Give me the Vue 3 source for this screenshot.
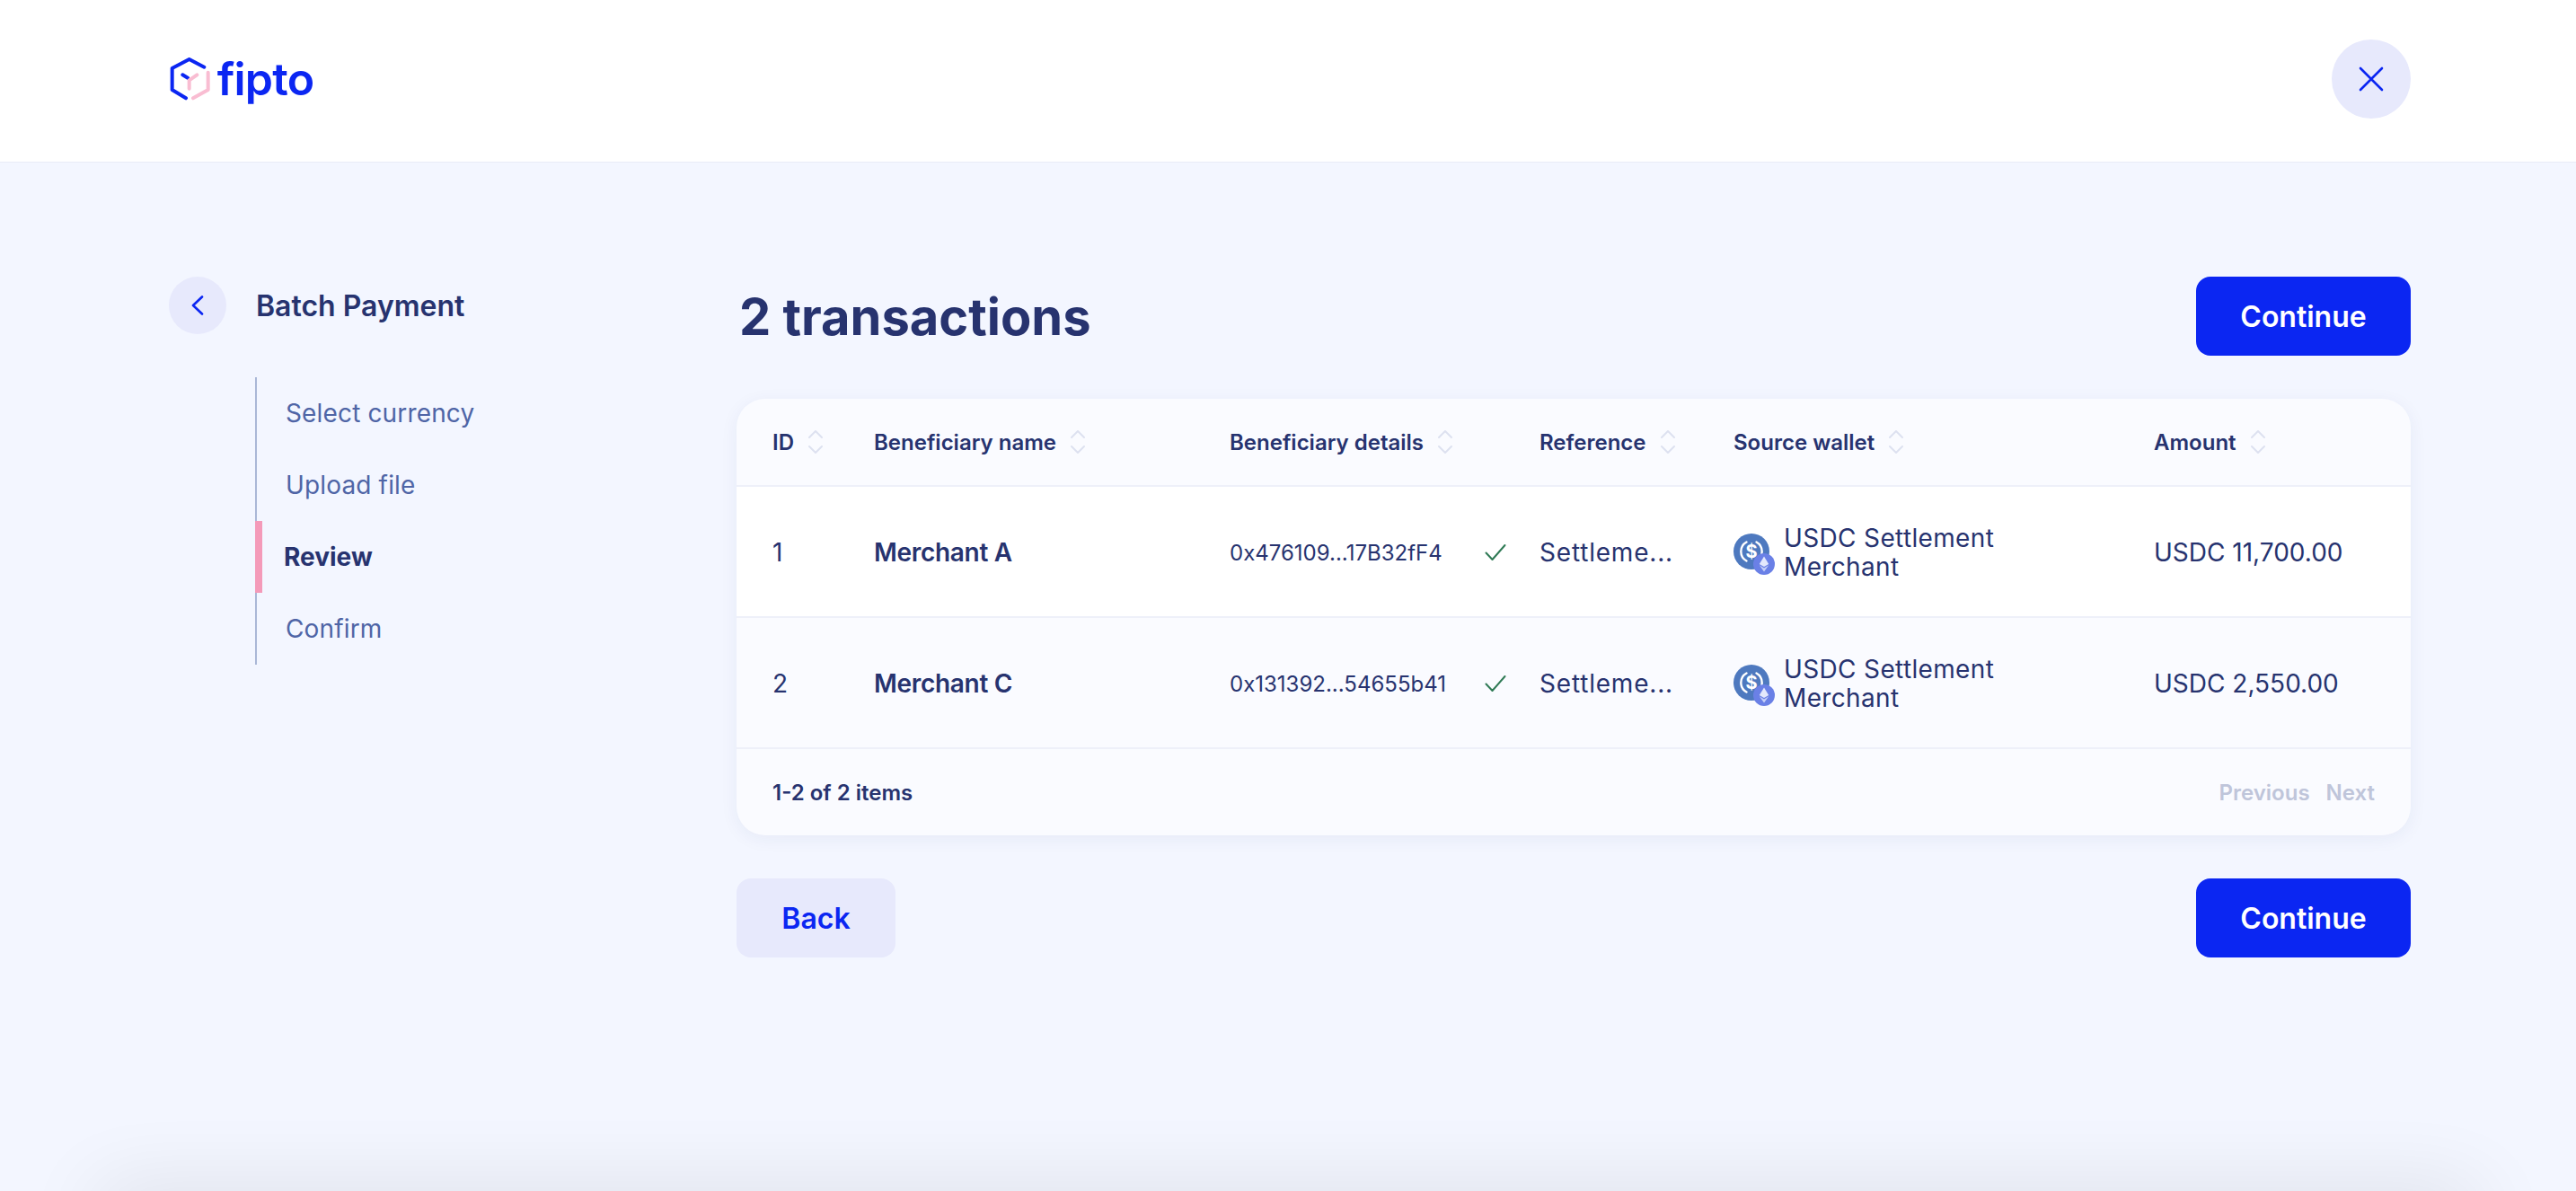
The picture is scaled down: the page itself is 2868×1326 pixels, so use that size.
<script setup>
const columns = ['ID', 'Beneficiary name', 'Beneficiary details', 'Reference', 'Source wallet', 'Amount']
const steps = [
  { label: 'Select currency' },
  { label: 'Upload file' },
  { label: 'Review', active: true },
  { label: 'Confirm' }
]
const rows = [
  { id: 1, name: 'Merchant A', address: '0x476109...17B32fF4', reference: 'Settleme...', wallet: 'USDC Settlement Merchant', amount: 'USDC 11,700.00' },
  { id: 2, name: 'Merchant C', address: '0x131392...54655b41', reference: 'Settleme...', wallet: 'USDC Settlement Merchant', amount: 'USDC 2,550.00' }
]
</script>

<template>
  <div class="page">
    <header class="top">
      <div class="logo">
        <svg class="logo-mark" viewBox="54 72 137 144" fill="none" stroke-width="12" stroke-linecap="round" stroke-linejoin="round">
          <path d="M172 104 122 78 65 108v72l46 28M100 130l17 10" stroke="#0b26f2" />
          <path d="M185 122v58l-50 28M148 130l-26 18v28" stroke="#f9bdd2" />
        </svg>
        <span class="logo-word">fipto</span>
      </div>
      <button class="close" type="button" aria-label="Close">
        <svg width="28" height="28" viewBox="0 0 28 28" fill="none" stroke="#0b26f2" stroke-width="2.6" stroke-linecap="round">
          <path d="M2 2l24 24M26 2 2 26" />
        </svg>
      </button>
    </header>

    <div class="content">
      <aside class="side">
        <div class="side-head">
          <button class="back-round" type="button" aria-label="Back">
            <svg width="14" height="22" viewBox="0 0 14 22" fill="none" stroke="#0b26f2" stroke-width="2.6" stroke-linecap="round" stroke-linejoin="round">
              <path d="M12 1.500 2 11l10 9.500" />
            </svg>
          </button>
          <h2 class="side-title">Batch Payment</h2>
        </div>
        <ul class="steps">
          <li v-for="s in steps" :key="s.label" class="step" :class="{ 'step--active': s.active }">{{ s.label }}</li>
        </ul>
      </aside>

      <main class="main">
        <div class="main-head">
          <h1 class="heading">2 transactions</h1>
          <button class="btn btn--primary" type="button">Continue</button>
        </div>

        <section class="card">
          <div class="row row--head">
            <div v-for="c in columns" :key="c" class="cell th">
              <span>{{ c }}</span>
              <svg class="sort" width="18" height="28" viewBox="0 0 18 28" fill="none" stroke="#dde1f0" stroke-width="2" stroke-linecap="round" stroke-linejoin="round">
                <path d="M2 9 9 2l7 7M2 19l7 7 7-7" />
              </svg>
            </div>
          </div>

          <div v-for="r in rows" :key="r.id" class="row row--body">
            <div class="cell">{{ r.id }}</div>
            <div class="cell name">{{ r.name }}</div>
            <div class="cell details">
              <span class="address">{{ r.address }}</span>
              <svg class="check" width="24" height="20" viewBox="0 0 24 20" fill="none" stroke="#2f7a55" stroke-width="2" stroke-linecap="round" stroke-linejoin="round">
                <path d="M1.500 10.500 8.500 18 22.500 2" />
              </svg>
            </div>
            <div class="cell reference">{{ r.reference }}</div>
            <div class="cell wallet">
              <svg class="coin" width="46" height="46" viewBox="0 0 46 46">
                <circle cx="20" cy="20" r="20" fill="#4e79bf" />
                <path d="M14.500 9.500a12 12 0 0 0 0 21M25.500 9.500a12 12 0 0 1 0 21" fill="none" stroke="#fff" stroke-width="2.400" stroke-linecap="round" />
                <text x="20" y="26.500" text-anchor="middle" class="coin-sign">$</text>
                <circle cx="34" cy="34" r="12" fill="#6a80e6" />
                <path d="M34 25.500 28.800 34 34 37l5.200-3z" fill="#e3e8fc" />
                <path d="M34 38.500 28.800 35.300 34 42.500l5.200-7.200z" fill="#c6d0f8" />
              </svg>
              <span class="wallet-name">{{ r.wallet }}</span>
            </div>
            <div class="cell">{{ r.amount }}</div>
          </div>

          <footer class="card-foot">
            <span>1-2 of 2 items</span>
            <div class="pager">
              <span>Previous</span>
              <span>Next</span>
            </div>
          </footer>
        </section>

        <div class="actions">
          <button class="btn btn--soft" type="button">Back</button>
          <button class="btn btn--primary" type="button">Continue</button>
        </div>
      </main>
    </div>

    <div class="bottom-shade" aria-hidden="true" />
  </div>
</template>

<style scoped>
.page {
  position: relative;
  height: 1326px;
  overflow: hidden;
  background: #f3f6ff;
  color: #27336f;
  font-family: Inter, "Liberation Sans", sans-serif;
}

.top {
  height: 181px;
  box-sizing: border-box;
  padding: 0 184px 4px 188px;
  display: flex;
  align-items: center;
  justify-content: space-between;
  background: #fff;
  border-bottom: 1px solid #e9ecf7;
}

.logo {
  display: flex;
  align-items: center;
  gap: 8px;
}

.logo-mark {
  width: 45.67px;
  height: 48px;
}

.logo-word {
  font-size: 50px;
  font-weight: 600;
  line-height: 48px;
  letter-spacing: -0.8px;
  color: #0b26f2;
}

.close {
  width: 88px;
  height: 88px;
  padding: 0;
  border: 0;
  border-radius: 50%;
  background: #e7e9fc;
  display: flex;
  align-items: center;
  justify-content: center;
}

.content {
  display: flex;
  padding: 127px 184px 0 188px;
}

.side {
  width: 632px;
  flex: none;
}

.side-head {
  display: flex;
  align-items: center;
  gap: 33px;
}

.back-round {
  width: 64px;
  height: 64px;
  padding: 0;
  border: 0;
  border-radius: 50%;
  background: #e7e9fc;
  display: flex;
  align-items: center;
  justify-content: center;
}

.side-title {
  margin: 0;
  padding-top: 1px;
  font-size: 32px;
  font-weight: 600;
}

.steps {
  list-style: none;
  margin: 48px 0 0 96px;
  padding: 0;
  border-left: 2px solid #a9b7d6;
}

.step {
  position: relative;
  height: 80px;
  box-sizing: border-box;
  padding-left: 32px;
  display: flex;
  align-items: center;
  font-size: 28px;
  letter-spacing: 0.15px;
  color: #4f65a6;
}

.step--active {
  padding-left: 30px;
  font-weight: 700;
  letter-spacing: 0;
  color: #27336f;
}

.step--active::before {
  content: '';
  position: absolute;
  left: -2px;
  top: 0;
  bottom: 0;
  width: 8px;
  background: #f49ab9;
}

.main {
  flex: 1;
  min-width: 0;
}

.main-head {
  display: flex;
  align-items: center;
  justify-content: space-between;
}

.heading {
  margin: 0;
  padding: 2px 0 0 3px;
  font-size: 56px;
  font-weight: 700;
}

.btn {
  height: 88px;
  border: 0;
  border-radius: 16px;
  font-family: inherit;
  font-size: 32px;
  font-weight: 600;
}

.btn--primary {
  width: 239px;
  background: #0b26f2;
  color: #fff;
}

.btn--soft {
  width: 177px;
  background: #e7e9fc;
  color: #0b26f2;
}

.card {
  margin-top: 48px;
  border-radius: 32px;
  overflow: hidden;
  background: #fafbff;
  box-shadow: 0 4px 20px rgba(39, 51, 111, 0.06);
}

.row {
  display: grid;
  grid-template-columns: 153px 396px 345px 216px 468px 1fr;
  border-bottom: 2px solid #eef0f9;
}

.row--head {
  height: 98px;
  box-sizing: border-box;
}

.row--body {
  height: 146px;
  box-sizing: border-box;
  padding-top: 2px;
  font-size: 28px;
}

.row--body:nth-child(2) {
  background: #fff;
}

.cell {
  display: flex;
  align-items: center;
  min-width: 0;
}

.cell:first-child {
  padding-left: 40px;
}

.th {
  gap: 15px;
  font-size: 24px;
  font-weight: 600;
}

.name {
  font-weight: 600;
  letter-spacing: -0.3px;
}

.details {
  font-size: 24px;
}

.address {
  width: 284px;
  flex: none;
}

.reference {
  letter-spacing: 0.8px;
}

.wallet {
  gap: 10px;
}

.wallet-name {
  width: 300px;
  line-height: 32px;
  letter-spacing: 0.35px;
}

.coin {
  flex: none;
  margin-top: 4px;
}

.coin-sign {
  font-size: 20px;
  font-weight: 700;
  fill: #fff;
}

.card-foot {
  height: 96px;
  padding: 0 40px;
  display: flex;
  align-items: center;
  justify-content: space-between;
  font-size: 24px;
  font-weight: 600;
}

.pager {
  display: flex;
  gap: 18px;
  color: #bfc5da;
}

.actions {
  margin-top: 48px;
  display: flex;
  justify-content: space-between;
}

.bottom-shade {
  position: absolute;
  left: 110px;
  right: 110px;
  top: 100%;
  height: 60px;
  box-shadow: 0 0 90px rgba(0, 0, 0, 0.11);
}
</style>

<style>
body {
  margin: 0;
}
</style>
